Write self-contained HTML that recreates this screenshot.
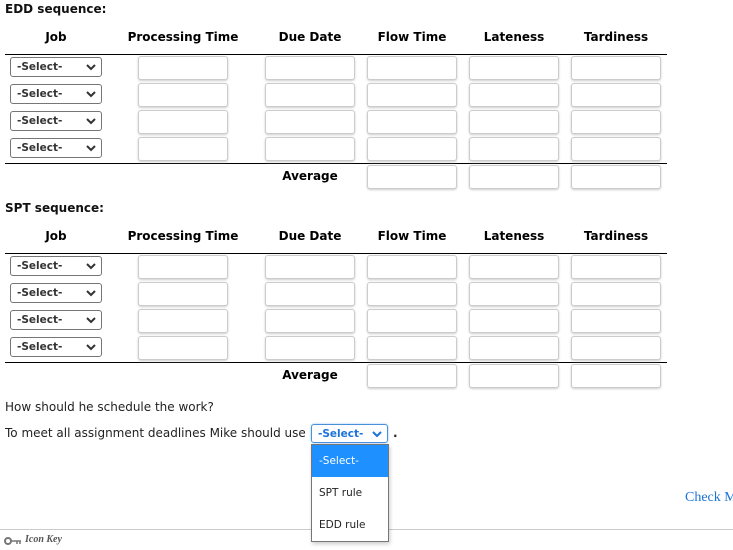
<!DOCTYPE html>
<html><head><meta charset="utf-8"><style>
body{margin:0;width:733px;height:550px;position:relative;background:#fff;font-family:"DejaVu Sans","Liberation Sans",sans-serif;color:#111;overflow:hidden}
.a{position:absolute}
.t{font-size:12px;font-weight:bold;line-height:16px;white-space:nowrap}
.h{font-size:12px;font-weight:bold;line-height:16px;white-space:nowrap;text-align:center;color:#000}
.hr{position:absolute;left:5px;width:662px;height:1px;background:#000}
.in{position:absolute;width:88px;height:22px;border:1px solid #ccc;border-radius:3px;box-shadow:0 1px 2px #ccc;background:#fff}
.sel{position:absolute;left:10px;height:18px;border:1px solid #767676;border-radius:3px;background:#fff;font-size:10.5px;font-weight:bold;color:#333;line-height:18px;padding-left:6px;box-sizing:content-box;width:84px}
.sel svg{position:absolute;right:5px;top:6px}
.p{font-size:12px;line-height:16px;white-space:nowrap;color:#222}
</style></head><body>

<div class="a t" style="left:5px;top:1px">EDD sequence:</div>
<div class="a h" style="left:10px;width:92px;top:29px">Job</div>
<div class="a h" style="left:118px;width:130px;top:29px">Processing Time</div>
<div class="a h" style="left:255px;width:110px;top:29px">Due Date</div>
<div class="a h" style="left:362px;width:100px;top:29px">Flow Time</div>
<div class="a h" style="left:464px;width:100px;top:29px">Lateness</div>
<div class="a h" style="left:566px;width:100px;top:29px">Tardiness</div>
<div class="hr" style="top:54px"></div>
<div class="hr" style="top:163px"></div>
<div class="a h" style="left:265px;width:90px;top:168px">Average</div>

<div class="a t" style="left:5px;top:200px">SPT sequence:</div>
<div class="a h" style="left:10px;width:92px;top:228px">Job</div>
<div class="a h" style="left:118px;width:130px;top:228px">Processing Time</div>
<div class="a h" style="left:255px;width:110px;top:228px">Due Date</div>
<div class="a h" style="left:362px;width:100px;top:228px">Flow Time</div>
<div class="a h" style="left:464px;width:100px;top:228px">Lateness</div>
<div class="a h" style="left:566px;width:100px;top:228px">Tardiness</div>
<div class="hr" style="top:253px"></div>
<div class="hr" style="top:362px"></div>
<div class="a h" style="left:265px;width:90px;top:367px">Average</div>

<div class="sel" style="top:57px">-Select-<svg width="10" height="7"><path d="M1 1l4 4 4-4" stroke="#333" stroke-width="2" fill="none"/></svg></div>
<div class="sel" style="top:84px">-Select-<svg width="10" height="7"><path d="M1 1l4 4 4-4" stroke="#333" stroke-width="2" fill="none"/></svg></div>
<div class="sel" style="top:111px">-Select-<svg width="10" height="7"><path d="M1 1l4 4 4-4" stroke="#333" stroke-width="2" fill="none"/></svg></div>
<div class="sel" style="top:138px">-Select-<svg width="10" height="7"><path d="M1 1l4 4 4-4" stroke="#333" stroke-width="2" fill="none"/></svg></div>

<div class="in" style="left:138px;top:56px"></div><div class="in" style="left:265px;top:56px"></div><div class="in" style="left:367px;top:56px"></div><div class="in" style="left:469px;top:56px"></div><div class="in" style="left:571px;top:56px"></div>
<div class="in" style="left:138px;top:83px"></div><div class="in" style="left:265px;top:83px"></div><div class="in" style="left:367px;top:83px"></div><div class="in" style="left:469px;top:83px"></div><div class="in" style="left:571px;top:83px"></div>
<div class="in" style="left:138px;top:110px"></div><div class="in" style="left:265px;top:110px"></div><div class="in" style="left:367px;top:110px"></div><div class="in" style="left:469px;top:110px"></div><div class="in" style="left:571px;top:110px"></div>
<div class="in" style="left:138px;top:137px"></div><div class="in" style="left:265px;top:137px"></div><div class="in" style="left:367px;top:137px"></div><div class="in" style="left:469px;top:137px"></div><div class="in" style="left:571px;top:137px"></div>
<div class="in" style="left:367px;top:165px"></div><div class="in" style="left:469px;top:165px"></div><div class="in" style="left:571px;top:165px"></div>

<div class="sel" style="top:256px">-Select-<svg width="10" height="7"><path d="M1 1l4 4 4-4" stroke="#333" stroke-width="2" fill="none"/></svg></div>
<div class="sel" style="top:283px">-Select-<svg width="10" height="7"><path d="M1 1l4 4 4-4" stroke="#333" stroke-width="2" fill="none"/></svg></div>
<div class="sel" style="top:310px">-Select-<svg width="10" height="7"><path d="M1 1l4 4 4-4" stroke="#333" stroke-width="2" fill="none"/></svg></div>
<div class="sel" style="top:337px">-Select-<svg width="10" height="7"><path d="M1 1l4 4 4-4" stroke="#333" stroke-width="2" fill="none"/></svg></div>

<div class="in" style="left:138px;top:255px"></div><div class="in" style="left:265px;top:255px"></div><div class="in" style="left:367px;top:255px"></div><div class="in" style="left:469px;top:255px"></div><div class="in" style="left:571px;top:255px"></div>
<div class="in" style="left:138px;top:282px"></div><div class="in" style="left:265px;top:282px"></div><div class="in" style="left:367px;top:282px"></div><div class="in" style="left:469px;top:282px"></div><div class="in" style="left:571px;top:282px"></div>
<div class="in" style="left:138px;top:309px"></div><div class="in" style="left:265px;top:309px"></div><div class="in" style="left:367px;top:309px"></div><div class="in" style="left:469px;top:309px"></div><div class="in" style="left:571px;top:309px"></div>
<div class="in" style="left:138px;top:336px"></div><div class="in" style="left:265px;top:336px"></div><div class="in" style="left:367px;top:336px"></div><div class="in" style="left:469px;top:336px"></div><div class="in" style="left:571px;top:336px"></div>
<div class="in" style="left:367px;top:364px"></div><div class="in" style="left:469px;top:364px"></div><div class="in" style="left:571px;top:364px"></div>

<div class="a p" style="left:5px;top:399px">How should he schedule the work?</div>
<div class="a p" style="left:5px;top:425px">To meet all assignment deadlines Mike should use</div>
<div class="a" style="left:311px;top:424px;height:19px;border:1px solid #4a90d9;border-radius:3px;box-shadow:0 0 2px #9cc4ee;font-size:10.5px;font-weight:bold;color:#1a73d8;line-height:19px;padding-left:6px;box-sizing:border-box;width:77px">-Select-<svg style="position:absolute;right:5px;top:6px" width="10" height="7"><path d="M1 1l4 4 4-4" stroke="#1a73d8" stroke-width="2" fill="none"/></svg></div>
<div class="a p" style="left:393px;top:425px;font-weight:bold">.</div>

<div class="a" style="left:311px;top:444px;width:76px;height:96px;border:1px solid #767676;background:#fff;box-shadow:1px 2px 4px rgba(0,0,0,.2);font-size:10.5px;color:#222;z-index:5">
<div style="height:32px;background:#1e90ff;color:#fff;line-height:32px;padding-left:7px">-Select-</div>
<div style="height:32px;line-height:32px;padding-left:7px">SPT rule</div>
<div style="height:32px;line-height:32px;padding-left:7px">EDD rule</div>
</div>

<div class="a" style="left:685px;top:490px;width:48px;height:20px;overflow:hidden"><div style="font-family:'Liberation Serif',serif;font-size:14px;color:#1a73d8;white-space:nowrap">Check My Work</div></div>
<div class="a" style="left:0;top:529px;width:733px;height:1px;background:#ccc"></div>
<svg class="a" style="left:4px;top:536px" width="18" height="10"><circle cx="4" cy="5" r="3" fill="none" stroke="#777" stroke-width="2"/><path d="M7 5h10M13 5v3M16 5v3" stroke="#777" stroke-width="1.5"/></svg>
<div class="a" style="left:25px;top:534px;font-family:'Liberation Serif',serif;font-style:italic;font-weight:bold;font-size:10px;color:#555">Icon Key</div>
</body></html>
